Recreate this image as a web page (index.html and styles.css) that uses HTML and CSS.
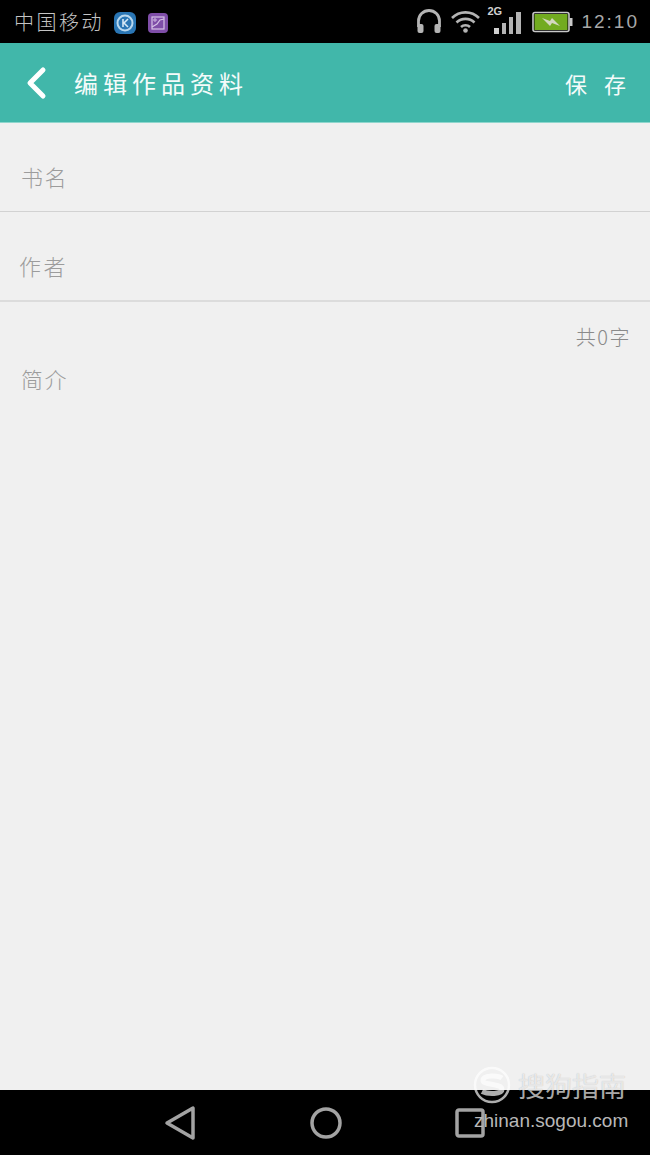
FILE: index.html
```html
<!DOCTYPE html>
<html lang="zh-CN">
<head>
  <meta charset="UTF-8" />
  <title>编辑作品资料</title>
  <link rel="stylesheet" href="styles.css">
</head>
<body>
  <div class="phone">

    <div class="statusbar">
      <span class="carrier">中国移动</span>
      <svg class="app-icon" width="24" height="24" viewBox="0 0 24 24">
        <rect x="1" y="1" width="22" height="22" rx="6" fill="#2a76b4"/>
        <circle cx="12" cy="12" r="7.5" fill="none" stroke="#b9d8ee" stroke-width="2"/>
        <path d="M10 8v8M15 8l-4 4 4 4" fill="none" stroke="#d5e8f5" stroke-width="1.6"/>
      </svg>
      <svg class="app-icon gallery" width="22" height="22" viewBox="0 0 22 22">
        <rect x="1" y="1" width="20" height="20" rx="4" fill="#7f4ea8"/>
        <rect x="5" y="5" width="12" height="12" fill="none" stroke="#d6c2e6" stroke-width="1.2"/>
        <path d="M5 15l5-3 3-4 4-1" fill="none" stroke="#d6c2e6" stroke-width="1.2"/>
        <circle cx="8" cy="8" r="1.2" fill="none" stroke="#d6c2e6"/>
      </svg>

      <div class="status-right">
        <svg class="headset" width="26" height="26" viewBox="0 0 26 26">
          <path d="M2.500 18v-6a10.500 10.500 0 0 1 21 0v6" fill="none" stroke="#b4b4b4" stroke-width="2.800"/>
          <rect x="1.500" y="15" width="6" height="9" rx="2" fill="#b4b4b4"/>
          <rect x="18.500" y="15" width="6" height="9" rx="2" fill="#b4b4b4"/>
        </svg>
        <svg class="wifi" width="31" height="24" viewBox="0 0 31 24">
          <path d="M2 9a19 19 0 0 1 27 0M6.500 13.500a13 13 0 0 1 18 0M11 18a6.500 6.500 0 0 1 9 0" fill="none" stroke="#b4b4b4" stroke-width="2.600"/>
          <circle cx="15.500" cy="21.500" r="2.300" fill="#b4b4b4"/>
        </svg>
        <div class="signal">
          <span class="net">2G</span>
          <svg width="27" height="22" viewBox="0 0 27 22">
            <rect x="0" y="16" width="5" height="6" fill="#d0d0d0"/>
            <rect x="8" y="11" width="4" height="11" fill="#b4b4b4"/>
            <rect x="15" y="5" width="4" height="17" fill="#b4b4b4"/>
            <rect x="22" y="0" width="5" height="22" fill="#b4b4b4"/>
          </svg>
        </div>
        <svg class="battery" width="41" height="22" viewBox="0 0 41 22">
          <rect x="1" y="1.500" width="36" height="19" rx="2" fill="#000" stroke="#c8c8c8" stroke-width="1.600"/>
          <rect x="2.500" y="3" width="33" height="16" fill="#72ab20"/>
          <rect x="37.500" y="7" width="3" height="8" fill="#c8c8c8"/>
          <path d="M10 7l8 3 2-3 8 8-8-3-2 3z" fill="#d4d8c0"/>
        </svg>
        <span class="clock">12:10</span>
      </div>
    </div>

    <div class="appbar">
      <svg class="back" width="22" height="34" viewBox="0 0 22 34">
        <path d="M18 4L5 17l13 13" fill="none" stroke="#fff" stroke-width="5" stroke-linecap="round" stroke-linejoin="round"/>
      </svg>
      <span class="title">编辑作品资料</span>
      <span class="save">保存</span>
    </div>

    <div class="form">
      <div class="field">书名</div>
      <div class="field author">作者</div>
      <div class="count">共0字</div>
      <div class="intro">简介</div>
    </div>

    <div class="navbar">
      <svg width="32" height="36" viewBox="0 0 32 36">
        <path d="M29 3v30L3 18z" fill="none" stroke="#a3a3a3" stroke-width="3.500" stroke-linejoin="round"/>
      </svg>
      <svg width="32" height="32" viewBox="0 0 32 32">
        <circle cx="16" cy="16" r="14" fill="none" stroke="#a3a3a3" stroke-width="3.500"/>
      </svg>
      <svg width="30" height="30" viewBox="0 0 30 30">
        <rect x="2" y="2" width="26" height="26" rx="2" fill="none" stroke="#a3a3a3" stroke-width="3.500"/>
      </svg>
    </div>

    <div class="watermark">
      <div class="wm-top">
        <svg class="wm-logo" width="40" height="40" viewBox="0 0 40 40">
          <circle cx="19" cy="19" r="17" fill="none" stroke="#fff" stroke-width="2.500"/>
          <path d="M29 12c-4-3-19-3-19 2.500 0 5 19 2.500 19 9 0 5-14 5-20 2" fill="none" stroke="#fff" stroke-width="5"/>
        </svg>
        <span class="wm-name">搜狗指南</span>
      </div>
      <div class="wm-url">zhinan.sogou.com</div>
    </div>

  </div>
</body>
</html>
```

FILE: styles.css
```css
* {
  box-sizing: border-box;
}

body {
  margin: 0;
  background: #f0f0f0;
  font-family: "Noto Sans CJK SC", "Noto Sans", sans-serif;
}

.phone {
  position: relative;
  width: 650px;
  height: 1155px;
  display: flex;
  flex-direction: column;
  overflow: hidden;
}

/* status bar */
.statusbar {
  height: 43px;
  background: #000;
  display: flex;
  align-items: center;
  padding: 0 11px 0 14px;
  color: #c4c4c4;
}

.carrier {
  font-size: 20px;
  font-weight: 300;
  letter-spacing: 2.5px;
  margin-right: 9px;
}

.app-icon {
  margin-right: 9px;
  margin-top: 3px;
}

.gallery {
  margin-left: 1px;
}

.status-right {
  margin-left: auto;
  display: flex;
  align-items: center;
}

.headset {
  margin-top: 1px;
}

.wifi {
  margin-left: 8px;
  margin-top: -2px;
}

.signal {
  position: relative;
  width: 36px;
  height: 36px;
  margin-left: 4px;
  padding-bottom: 6px;
  display: flex;
  align-items: flex-end;
  justify-content: flex-end;
}

.net {
  position: absolute;
  left: 2px;
  top: 1px;
  font-family: "Liberation Sans", sans-serif;
  font-size: 11px;
  font-weight: bold;
  color: #d0d0d0;
}

.battery {
  margin-left: 11px;
}

.clock {
  margin-left: 8px;
  font-family: "Liberation Sans", sans-serif;
  font-size: 19px;
  letter-spacing: 2px;
  color: #a8a8a8;
}

/* title bar */
.appbar {
  height: 80px;
  background: #41b7aa;
  border-bottom: 1px solid #8fd6cd;
  display: flex;
  align-items: center;
  padding: 0 24px 0 25px;
  color: #f4fbfa;
}

.back {
  margin-right: 27px;
}

.title {
  font-size: 24px;
  letter-spacing: 5px;
}

.save {
  margin-left: auto;
  font-size: 22px;
  letter-spacing: 17px;
  margin-right: -17px;
}

/* form */
.form {
  flex: 1;
  background: #f0f0f0;
  color: #9c9c9c;
  font-size: 22px;
  font-weight: 300;
  letter-spacing: 1.5px;
}

.field {
  height: 89px;
  padding: 37px 0 0 21px;
  line-height: 32px;
  border-bottom: 1px solid #d2d2d2;
}

.author {
  height: 90px;
  padding-left: 19px;
  letter-spacing: 2.5px;
  border-bottom: 2px solid #dcdcdc;
}

.count {
  text-align: right;
  padding: 21px 19px 0 0;
  font-size: 20px;
  line-height: 28px;
  letter-spacing: 1.5px;
  color: #8a8a8a;
}

.intro {
  padding: 11px 0 0 21px;
  line-height: 32px;
}

/* nav */
.navbar {
  height: 65px;
  background: #000;
  display: flex;
  align-items: center;
  justify-content: space-between;
  padding: 0 165px 0 164px;
}

/* watermark sits over the nav bar */
.watermark {
  position: absolute;
  left: 473px;
  top: 1066px;
  width: 153px;
}

.wm-top {
  display: flex;
  align-items: center;
  height: 40px;
}

.wm-logo {
  opacity: 0.68;
}

.wm-name {
  font-size: 27px;
  line-height: 40px;
  margin-left: 5px;
  white-space: nowrap;
  color: rgba(255, 255, 255, 0.68);
  text-shadow: 0 0 1px rgba(0, 0, 0, 0.25);
}

.wm-url {
  font-family: "Liberation Sans", sans-serif;
  font-size: 19px;
  margin-top: 4px;
  margin-left: 1px;
  white-space: nowrap;
  color: #b8b8b8;
}
```
